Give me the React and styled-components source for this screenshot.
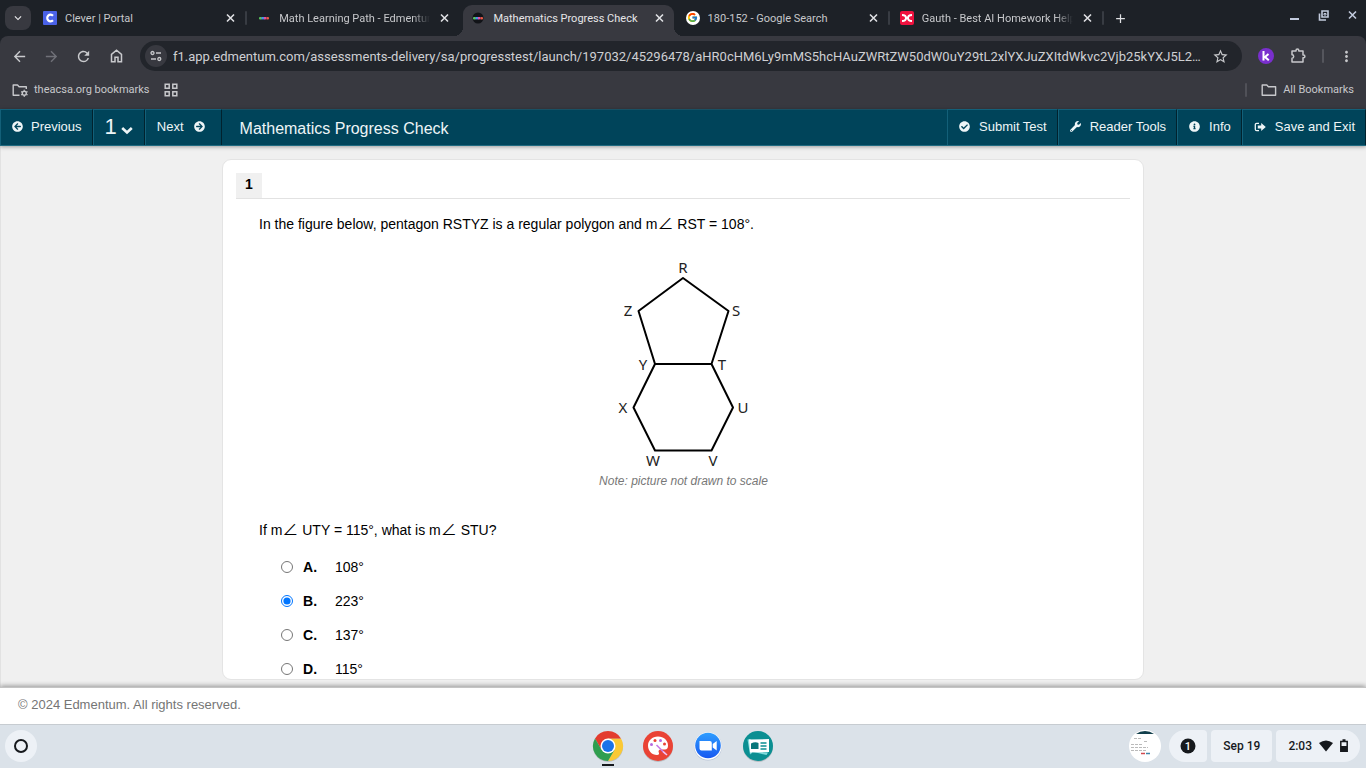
import React, { useState } from "react"
import styled, { createGlobalStyle } from "styled-components"
import {
  FaArrowCircleLeft,
  FaArrowCircleRight,
  FaCheckCircle,
  FaInfoCircle,
  FaWrench,
} from "react-icons/fa"
import { FcGoogle } from "react-icons/fc"
import {
  MdAdd,
  MdArrowBack,
  MdArrowForward,
  MdKeyboardArrowDown,
  MdMoreVert,
  MdRefresh,
  MdStarBorder,
} from "react-icons/md"

const GlobalStyle = createGlobalStyle`
  * {
    box-sizing: border-box;
  }
  body {
    margin: 0;
    background: #f0f0f0;
  }
  button {
    margin: 0;
    padding: 0;
    border: 0;
    background: none;
    color: inherit;
    font: inherit;
    cursor: pointer;
  }
  a {
    color: inherit;
    text-decoration: none;
  }
  svg {
    display: block;
    flex-shrink: 0;
  }
`

const Screen = styled.div`
  display: flex;
  flex-direction: column;
  height: 100vh;
  overflow: hidden;
`

/* browser */

const Browser = styled.header`
  flex-shrink: 0;
  background: #1d2127;
  color: #c7c8cb;
  font-family: Roboto, sans-serif;
  font-size: 11px;
`

const TabStrip = styled.div`
  display: flex;
  height: 36px;
  padding-left: 5px;
`

const TabSearch = styled.button`
  display: flex;
  align-items: center;
  justify-content: center;
  width: 26px;
  height: 24px;
  margin: 6px 4px 0 0;
  border-radius: 8px;
  background: #383940;
  color: #e8e8ea;
`

const Tabs = styled.nav`
  display: flex;
  flex: 0 1 1071px;
  min-width: 0;
`

const Tab = styled.div`
  position: relative;
  display: flex;
  flex: 1;
  align-items: center;
  min-width: 0;
  height: ${(p) => (p.$active ? 31 : 26)}px;
  margin: 5px 4px 0 0;
  padding: ${(p) => (p.$active ? "0 8px 5px" : "0 8px")};
  border-radius: 9px 9px 0 0;
  background: ${(p) => (p.$active ? "#383940" : "transparent")};
  color: ${(p) => (p.$active ? "#e6e6e8" : "#c7c8cb")};

  &::before,
  &::after {
    content: "";
    display: ${(p) => (p.$active ? "block" : "none")};
    position: absolute;
    bottom: 0;
    width: 9px;
    height: 9px;
  }
  &::before {
    right: 100%;
    background: radial-gradient(circle at 0 0, transparent 9px, #383940 9px);
  }
  &::after {
    left: 100%;
    background: radial-gradient(circle at 100% 0, transparent 9px, #383940 9px);
  }
`

const TabTitle = styled.a`
  flex: 1;
  min-width: 0;
  margin-left: 8px;
  overflow: hidden;
  white-space: nowrap;
  mask-image: ${(p) =>
    p.$fade ? "linear-gradient(to right, #000 calc(100% - 18px), transparent)" : "none"};
`

const TabClose = styled.button`
  margin-left: 8px;
  color: #e0e1e4;
`

const Divider = styled.span`
  flex-shrink: 0;
  width: 2px;
  height: 14px;
  margin: ${(p) => p.$margin || "0"};
  border-radius: 1px;
  background: ${(p) => p.$color || "#383c43"};
`

const WindowControls = styled.div`
  display: flex;
  gap: 16px;
  align-items: center;
  align-self: flex-start;
  margin: 9px 7px 0 auto;
  color: #c2cbdd;
`

const NewTab = styled.button`
  margin-left: 7px;
  color: #e0e1e4;
`

const ToolBar = styled.div`
  display: flex;
  align-items: center;
  height: 40px;
  padding: 0 11px;
  border-radius: 8px 8px 0 0;
  background: #383940;
`

const ToolButton = styled.button`
  margin-right: 15px;
  color: ${(p) => (p.$faded ? "#707178" : "#c9cacd")};
`

const AddressBar = styled.div`
  display: flex;
  flex: 1;
  align-items: center;
  height: 30px;
  margin-right: 16px;
  padding: 0 13px 0 5px;
  border-radius: 15px;
  background: #22252b;
`

const SiteInfo = styled.button`
  display: flex;
  align-items: center;
  justify-content: center;
  width: 22px;
  height: 22px;
  border-radius: 50%;
  background: #383940;
`

const AddressInput = styled.input`
  flex: 1;
  min-width: 0;
  margin: 0 9px 0 6px;
  padding: 0;
  border: 0;
  outline: 0;
  background: none;
  color: #cfd0d3;
  font: 13px Roboto, sans-serif;
  text-overflow: ellipsis;
`

const Extension = styled.button`
  display: flex;
  align-items: center;
  justify-content: center;
  width: 16px;
  height: 16px;
  margin-right: 16px;
  border-radius: 50%;
  background: #7a2fce;
  color: #fff;
`

const BookmarksBar = styled.div`
  display: flex;
  align-items: center;
  height: 33px;
  padding: 0 12px 6px;
  background: #383940;
`

const Bookmark = styled.a`
  display: flex;
  align-items: center;
  gap: 6px;
  margin-right: 14px;
`

const AllBookmarks = styled(Bookmark)`
  margin: 0 0 0 14px;
`

/* test player */

const Player = styled.div`
  display: flex;
  flex: 1;
  flex-direction: column;
  min-height: 0;
  background: #f0f0f0;
  color: #000;
  font-family: "Liberation Sans", Arial, sans-serif;
  font-size: 14px;
`

const NavBar = styled.nav`
  position: relative;
  display: flex;
  flex-shrink: 0;
  height: 37px;
  border-bottom: 1px solid #1f6a80;
  background: #00445a;
  box-shadow: 0 1px 4px rgba(0, 0, 0, 0.35);
  color: #eef5f7;
`

const NavButton = styled.button`
  display: flex;
  align-items: center;
  gap: ${(p) => p.$gap || 9}px;
  padding: 0 ${(p) => p.$end || 10}px 2px 11px;
  border: 1px solid #136079;
  border-width: 1px 1px 0;
  border-right-color: #01222e;
  font-size: ${(p) => (p.$large ? 22 : 13)}px;
`

const Title = styled.h1`
  flex: 1;
  margin: 0;
  padding: 2px 0 0 18px;
  border-top: 1px solid #185063;
  font-size: 16px;
  font-weight: 400;
  line-height: 34px;
`

const Content = styled.main`
  display: flex;
  flex: 1;
  justify-content: center;
  min-height: 0;
  padding: 13px 16px 7px;
  box-shadow: inset 1px 0 #e2e2e2;
`

const Card = styled.section`
  width: 922px;
  overflow: hidden;
  padding: 13px;
  border: 1px solid #e4e4e4;
  border-radius: 9px;
  background: #fff;
`

const QuestionHead = styled.div`
  display: flex;
  border-bottom: 1px solid #e2e2e2;
`

const QuestionNumber = styled.h2`
  width: 26px;
  margin: 0;
  padding-bottom: 2px;
  background: #f0f0f0;
  font-size: 14px;
  line-height: 23px;
  text-align: center;
`

const QuestionBody = styled.div`
  padding: 15px 22px 0 23px;
`

const Prompt = styled.p`
  margin: 0;
  font-size: 14px;
  line-height: 20px;
`

const Angle = styled.span`
  font-family: "Noto Sans CJK SC", sans-serif;
  font-size: 16px;
  line-height: 0;
`

const FigureBox = styled.figure`
  display: flex;
  flex-direction: column;
  align-items: center;
  margin: 24px 0 31px;
`

const Shape = styled.svg`
  font-family: "Noto Sans", sans-serif;
  font-size: 15px;
  fill: #222;
  text-anchor: middle;

  path {
    fill: none;
    stroke: #000;
    stroke-width: 2;
    stroke-linejoin: round;
  }
`

const Caption = styled.figcaption`
  color: #777;
  font-size: 12px;
  font-style: italic;
  line-height: 15px;
`

const Choices = styled.fieldset`
  margin: 10px 0 0;
  padding: 0 0 0 22px;
  border: 0;
`

const Choice = styled.label`
  display: flex;
  align-items: center;
  height: 34px;
`

const Radio = styled.input`
  width: 12px;
  height: 12px;
  margin: 0 10px 0 0;
`

const Letter = styled.b`
  width: 32px;
`

const Copyright = styled.footer`
  position: relative;
  flex-shrink: 0;
  height: 37px;
  padding-left: 18px;
  border-top: 1px solid #c4c4c4;
  background: #fff;
  box-shadow: 0 -1px 5px rgba(0, 0, 0, 0.4);
  color: #757575;
  font-size: 13px;
  line-height: 34px;
`

/* shelf */

const Shelf = styled.footer`
  position: relative;
  display: grid;
  grid-template-columns: 1fr auto 1fr;
  flex-shrink: 0;
  align-items: center;
  height: 44px;
  padding: 0 6px 2px 5px;
  border-top: 1px solid #c7ccd1;
  background: #dbe2e9;
  color: #16191d;
  font: 500 12px Roboto, sans-serif;
`

const Launcher = styled.button`
  display: flex;
  align-items: center;
  justify-content: center;
  width: 32px;
  height: 32px;
  border-radius: 50%;
  background: #edf1f6;
`

const Apps = styled.div`
  display: flex;
  gap: 18px;
`

const AppButton = styled.button`
  position: relative;

  &::after {
    content: "";
    display: ${(p) => (p.$running ? "block" : "none")};
    position: absolute;
    bottom: -4px;
    left: 10px;
    width: 12px;
    height: 2px;
    background: #16191d;
  }
`

const Tray = styled.div`
  display: flex;
  align-items: center;
  justify-content: flex-end;
  gap: 4px;
`

const TrayButton = styled.button`
  display: flex;
  align-items: center;
  justify-content: center;
  gap: 7px;
  height: 32px;
  padding: 0 ${(p) => p.$pad || 12}px;
  border-radius: ${(p) => p.$radius || "4px"};
  background: #edf1f6;
`

const HoldingSpace = styled.button`
  margin-right: 4px;
`

const CleverIcon = () => (
  <svg width="14" height="14" viewBox="0 0 14 14">
    <rect width="14" height="14" rx="1" fill="#4a62e8" />
    <path d="M10 4.8A3.3 3.3 0 1 0 10 9.2" fill="none" stroke="#fff" strokeWidth="2.2" />
  </svg>
)

const EdmentumIcon = ({ dark }) => (
  <svg width="14" height="14" viewBox="0 0 14 14">
    {dark && <circle cx="7" cy="7" r="5.5" fill="#111317" />}
    <rect x="2" y="6" width="3" height="2.4" rx="1" fill="#58c75a" />
    <rect x="4.5" y="6" width="3" height="2.4" fill="#4c8de8" />
    <rect x="7" y="6" width="2.5" height="2.4" fill="#e44fa0" />
    <rect x="9.5" y="6" width="2.5" height="2.4" rx="1" fill="#ef5b43" />
  </svg>
)

const GoogleIcon = () => (
  <svg width="14" height="14" viewBox="0 0 14 14">
    <circle cx="7" cy="7" r="7" fill="#fff" />
    <FcGoogle x="1" y="1" width="12" height="12" />
  </svg>
)

const GauthIcon = () => (
  <svg width="14" height="14" viewBox="0 0 14 14">
    <rect width="14" height="14" rx="2" fill="#f0123f" />
    <path
      d="M2 4c3 0 4 1 4 3s-1 3-4 3M12 4c-3 0-4 1-4 3s1 3 4 3M6 7h2"
      fill="none"
      stroke="#fff"
      strokeWidth="2"
    />
  </svg>
)

const CloseIcon = () => (
  <svg width="13" height="13" viewBox="0 0 13 13">
    <path d="m3 2.500 7 7M10 2.500l-7 7" stroke="currentColor" strokeWidth="1.6" />
  </svg>
)

const MinimizeIcon = () => (
  <svg width="13" height="13" viewBox="0 0 13 13">
    <path d="M2 10h9" stroke="currentColor" strokeWidth="2" />
  </svg>
)

const RestoreIcon = () => (
  <svg width="13" height="13" viewBox="0 0 13 13" fill="none" stroke="currentColor">
    <path d="M5 2h6v6H5z" strokeWidth="1.6" />
    <path d="M7 4.500h2v1.500H7z" />
    <path d="M2.500 4.500v6.500H9" strokeWidth="1.6" />
  </svg>
)

const HomeIcon = () => (
  <svg width="18" height="18" viewBox="0 0 18 18" fill="none" stroke="currentColor" strokeWidth="1.5">
    <path d="M4.500 7.300 9.500 3.200l5 4.100v7.500H11v-4.600H8v4.600H4.500z" />
  </svg>
)

const SiteInfoIcon = () => (
  <svg width="12" height="12" viewBox="0 0 12 12" fill="none" stroke="currentColor" strokeWidth="1.3">
    <circle cx="2.5" cy="3" r="1.5" />
    <path d="M6 3h5M1 9h5" />
    <circle cx="9.3" cy="9" r="1.5" />
  </svg>
)

const PuzzleIcon = () => (
  <svg width="18" height="18" viewBox="0 0 18 18" fill="none" stroke="currentColor" strokeWidth="1.5">
    <path
      d="M2 4h4v-.6a1.400 1.400 0 0 1 2.800 0V4h4.200v4h.5a1.400 1.400 0 0 1 0 2.800h-.5V15H2v-3.800a1.700 1.700 0 0 0 0-3.400z"
      strokeLinejoin="round"
    />
  </svg>
)

const FolderIcon = () => (
  <svg width="16" height="14" viewBox="0 0 16 14" fill="none" stroke="currentColor" strokeWidth="1.4">
    <path d="M1.200 12.300V2h4.600l1.600 1.700h7.200v8.600z" strokeLinejoin="round" />
  </svg>
)

const ManagedFolderIcon = () => (
  <svg width="16" height="14" viewBox="0 0 16 14" fill="none" stroke="currentColor" strokeWidth="1.4">
    <path d="M7.500 12.300H1.200V2h4.300l1.600 1.700h7.200V6" strokeLinejoin="round" />
    <circle cx="12.3" cy="10.2" r="2" />
    <path d="M12.300 6.700v1M12.300 12.700v1M9.200 8.500l1 .6M14.500 11.400l1 .6M9.200 12l1-.6M14.500 9.100l1-.6" />
  </svg>
)

const GridIcon = () => (
  <svg width="14" height="14" viewBox="0 0 14 14" fill="none" stroke="currentColor" strokeWidth="1.5">
    <path d="M1.200 1.200h4v4h-4zM8.800 1.200h4v4h-4zM1.200 8.800h4v4h-4zM8.800 8.800h4v4h-4z" />
  </svg>
)

const KIcon = () => (
  <svg width="10" height="10" viewBox="0 0 10 10" fill="none" stroke="#fff" strokeWidth="2">
    <path d="M2.500 0v9.500M7.500 3 4 6l3.800 3.300" />
  </svg>
)

const ChevronIcon = () => (
  <svg width="12" height="10" viewBox="0 0 12 10">
    <path d="m1.200 2 4.800 4.500L10.800 2" fill="none" stroke="currentColor" strokeWidth="2.6" />
  </svg>
)

const PageNumber = styled.span`
  line-height: 34px;
`

const ChevronBox = styled.span`
  padding-top: 8px;
`

const SignOutIcon = () => (
  <svg width="12" height="12" viewBox="0 0 12 12">
    <path d="M5 2.300H2.800Q1.300 2.300 1.300 3.800v4.400q0 1.500 1.500 1.500H5" fill="none" stroke="currentColor" strokeWidth="1.3" />
    <path d="M3.800 4.500h3.400V2L11.800 6 7.200 10V7.500H3.800z" fill="currentColor" />
  </svg>
)

const ChromeIcon = () => (
  <svg width="32" height="32" viewBox="0 0 32 32">
    <circle cx="16" cy="17" r="15" fill="#b9bec3" />
    <path d="M16 8.500h13A15 15 0 0 1 16 31l6.500-11.200z" fill="#fbc934" />
    <path d="M9.500 19.800 3 8.500A15 15 0 0 1 29 8.500H16z" fill="#e33b2e" />
    <path d="M3 8.500A15 15 0 0 0 16 31l6.500-11.200h-13z" fill="#2f9e4f" />
    <circle cx="16" cy="16" r="7.5" fill="#fff" />
    <circle cx="16" cy="16" r="6" fill="#1a73e8" />
  </svg>
)

const CanvasIcon = () => (
  <svg width="32" height="32" viewBox="0 0 32 32">
    <circle cx="16" cy="17" r="15" fill="#b9bec3" />
    <circle cx="16" cy="16" r="15" fill="#ea4335" />
    <path
      d="M16 6.500c-5.800 0-10 4-10 9 0 5.300 3.800 9.500 9 9.500 2 0 2.400-1.400 1.800-2.600-.7-1.400 0-3 2-3H23c2 0 3-1.500 3-4 0-5-4.200-8.900-10-8.900z"
      fill="#fff"
    />
    <circle cx="9.5" cy="14.5" r="1.5" fill="#b56ae0" />
    <circle cx="13" cy="10.5" r="1.5" fill="#ea4335" />
    <circle cx="18.5" cy="10.5" r="1.5" fill="#b56ae0" />
    <circle cx="22.5" cy="14" r="1.5" fill="#ea4335" />
    <path d="m14.500 15 9 9" stroke="#c77be8" strokeWidth="1.6" />
    <path d="m21 21.500 4 3.500" stroke="#f7c4ef" strokeWidth="1.6" />
  </svg>
)

const ZoomIcon = () => (
  <svg width="32" height="32" viewBox="0 0 32 32">
    <defs>
      <linearGradient id="zoom" x2="0" y2="1">
        <stop stopColor="#2d9dff" />
        <stop offset="1" stopColor="#1858f0" />
      </linearGradient>
    </defs>
    <circle cx="16" cy="16.5" r="14" fill="#b9c4d6" />
    <circle cx="16" cy="16" r="13.7" fill="#fff" />
    <circle cx="16" cy="15.5" r="12.8" fill="url(#zoom)" />
    <path d="M7.500 11h10.300q2 0 2 2v7.500H9.500q-2 0-2-2zM20.700 14l4-3v9.500l-4-3z" fill="#fff" />
  </svg>
)

const NewsIcon = () => (
  <svg width="32" height="32" viewBox="0 0 32 32">
    <circle cx="16" cy="17" r="15" fill="#b9bec3" />
    <circle cx="16" cy="16" r="15" fill="#0b8f92" />
    <path d="m5.500 9.500 3-.5 1.500 14-2 1.500zM10 21.500l16 1-1.500 2.500z" fill="#7fdcdd" />
    <path d="M7 9.500 27 9v13L8 22.500z" fill="#fff" />
    <path d="M9 13.500q4-2 7.500-.5v6H9z" fill="#07777a" />
    <path d="M18.500 13h6M18.500 16h6M18.500 19h6" stroke="#0b8f92" strokeWidth="1.5" />
  </svg>
)

const ScreenshotIcon = () => (
  <svg width="32" height="32" viewBox="0 0 32 32">
    <circle cx="16" cy="16" r="16" fill="#fff" />
    <path d="M7 4A15 15 0 0 1 25 4z" fill="#123f4c" />
    <path d="M5 8.500h7M15 11.500h3M2 14.500h12M2 17.500h17M2 20.500h15" stroke="#bbb" strokeDasharray="3 1" />
    <path d="M12 23.500h4" stroke="#d14a50" strokeWidth="1.5" />
    <path d="M17 23.500h4" stroke="#3e86a8" strokeWidth="1.5" />
  </svg>
)

const LauncherIcon = () => (
  <svg width="16" height="16" viewBox="0 0 16 16">
    <circle cx="8" cy="8" r="6" fill="none" stroke="#16191d" strokeWidth="2" />
  </svg>
)

const NoticeIcon = () => (
  <svg width="16" height="16" viewBox="0 0 16 16">
    <circle cx="8" cy="8" r="7.5" fill="#16191d" />
    <text x="8" y="12" fill="#fff" fontSize="11" textAnchor="middle">
      1
    </text>
  </svg>
)

const WifiIcon = () => (
  <svg width="14" height="12" viewBox="0 0 14 12">
    <path d="M0 3Q7-2.200 14 3L7 11.500z" fill="currentColor" />
  </svg>
)

const BatteryIcon = () => (
  <svg width="8" height="13" viewBox="0 0 8 13">
    <path d="M.8 2.500h6.400v9.700H.8z" fill="none" stroke="currentColor" strokeWidth="1.5" />
    <path d="M2.500.3h3V2h-3zM1 7h6v5H1z" fill="currentColor" />
  </svg>
)

const tabs = [
  { title: "Clever | Portal", icon: <CleverIcon /> },
  { title: "Math Learning Path - Edmentum", icon: <EdmentumIcon />, fade: true },
  { title: "Mathematics Progress Check", icon: <EdmentumIcon dark />, active: true },
  { title: "180-152 - Google Search", icon: <GoogleIcon /> },
  { title: "Gauth - Best AI Homework Helper", icon: <GauthIcon />, fade: true },
]

const url =
  "f1.app.edmentum.com/assessments-delivery/sa/progresstest/launch/197032/45296478/aHR0cHM6Ly9mMS5hcHAuZWRtZW50dW0uY29tL2xlYXJuZXItdWkvc2Vjb25kYXJ5L2luZGV4Lmh0bWw"

const choices = [
  ["A", "108°"],
  ["B", "223°"],
  ["C", "137°"],
  ["D", "115°"],
]

const labels = [
  ["R", 82, 15],
  ["Z", 27, 58],
  ["S", 135, 58],
  ["Y", 42, 112],
  ["T", 121, 112],
  ["X", 22, 155],
  ["U", 142, 155],
  ["W", 52, 208],
  ["V", 112, 208],
]

const Chrome = () => (
  <Browser>
    <TabStrip>
      <TabSearch aria-label="Search tabs">
        <MdKeyboardArrowDown size={14} />
      </TabSearch>
      <Tabs>
        {tabs.map((tab, i) => (
          <React.Fragment key={tab.title}>
            <Tab $active={tab.active}>
              {tab.icon}
              <TabTitle href="#" $fade={tab.fade}>
                {tab.title}
              </TabTitle>
              <TabClose aria-label="Close tab">
                <CloseIcon />
              </TabClose>
            </Tab>
            {(i === 0 || i > 2) && <Divider $margin="11px 0 0 -4px" />}
            {(i === 0 || i > 2) && <Divider $color="transparent" />}
          </React.Fragment>
        ))}
      </Tabs>
      <NewTab aria-label="New tab">
        <MdAdd size={15} />
      </NewTab>
      <WindowControls>
        <button aria-label="Minimize">
          <MinimizeIcon />
        </button>
        <button aria-label="Restore">
          <RestoreIcon />
        </button>
        <button aria-label="Close">
          <CloseIcon />
        </button>
      </WindowControls>
    </TabStrip>
    <ToolBar>
      <ToolButton aria-label="Back">
        <MdArrowBack size={17} />
      </ToolButton>
      <ToolButton aria-label="Forward" $faded>
        <MdArrowForward size={17} />
      </ToolButton>
      <ToolButton aria-label="Reload">
        <MdRefresh size={17} />
      </ToolButton>
      <ToolButton aria-label="Home">
        <HomeIcon />
      </ToolButton>
      <AddressBar>
        <SiteInfo aria-label="Site information">
          <SiteInfoIcon />
        </SiteInfo>
        <AddressInput aria-label="Address" defaultValue={url} />
        <button aria-label="Bookmark this tab">
          <MdStarBorder size={17} />
        </button>
      </AddressBar>
      <Extension aria-label="Kami">
        <KIcon />
      </Extension>
      <button aria-label="Extensions">
        <PuzzleIcon />
      </button>
      <Divider $margin="0 14px 0 14px" $color="#55565d" />
      <button aria-label="Menu">
        <MdMoreVert size={17} />
      </button>
    </ToolBar>
    <BookmarksBar>
      <Bookmark href="#">
        <ManagedFolderIcon />
        theacsa.org bookmarks
      </Bookmark>
      <button aria-label="Tab groups">
        <GridIcon />
      </button>
      <Divider $margin="0 0 0 auto" $color="#505158" />
      <AllBookmarks href="#">
        <FolderIcon />
        All Bookmarks
      </AllBookmarks>
    </BookmarksBar>
  </Browser>
)

const Polygons = () => (
  <Shape width="164" height="216" viewBox="1 0 164 216" role="img" aria-label="Pentagon RSTYZ and hexagon TUVWXY">
    <path d="M82 20 127.500 53 110.500 106H54L37.500 53zM54 106 32.500 149.500 54 192.500h56.500L132 149.500 110.500 106" />
    {labels.map(([name, x, y]) => (
      <text key={name} x={x} y={y}>
        {name}
      </text>
    ))}
  </Shape>
)

export default () => {
  const [answer, setAnswer] = useState("B")

  return (
    <Screen>
      <GlobalStyle />
      <Chrome />
      <Player>
        <NavBar>
          <NavButton $gap={8}>
            <FaArrowCircleLeft size={11} />
            Previous
          </NavButton>
          <NavButton $large $gap={4} $end={11} aria-label="Question 1">
            <PageNumber>1</PageNumber>
            <ChevronBox>
              <ChevronIcon />
            </ChevronBox>
          </NavButton>
          <NavButton $gap={10} $end={16}>
            Next
            <FaArrowCircleRight size={11} />
          </NavButton>
          <Title>Mathematics Progress Check</Title>
          <NavButton>
            <FaCheckCircle size={11} />
            Submit Test
          </NavButton>
          <NavButton>
            <FaWrench size={11} />
            Reader Tools
          </NavButton>
          <NavButton>
            <FaInfoCircle size={11} />
            Info
          </NavButton>
          <NavButton>
            <SignOutIcon />
            Save and Exit
          </NavButton>
        </NavBar>
        <Content>
          <Card>
            <QuestionHead>
              <QuestionNumber>1</QuestionNumber>
            </QuestionHead>
            <QuestionBody>
              <Prompt>
                In the figure below, pentagon RSTYZ is a regular polygon and m
                <Angle>∠</Angle> RST = 108°.
              </Prompt>
              <FigureBox>
                <Polygons />
                <Caption>Note: picture not drawn to scale</Caption>
              </FigureBox>
              <Prompt>
                If m<Angle>∠</Angle> UTY = 115°, what is m<Angle>∠</Angle> STU?
              </Prompt>
              <Choices aria-label="Answer choices">
                {choices.map(([letter, text]) => (
                  <Choice key={letter}>
                    <Radio
                      type="radio"
                      name="answer"
                      checked={answer === letter}
                      onChange={() => setAnswer(letter)}
                    />
                    <Letter>{letter}.</Letter>
                    {text}
                  </Choice>
                ))}
              </Choices>
            </QuestionBody>
          </Card>
        </Content>
        <Copyright>© 2024 Edmentum. All rights reserved.</Copyright>
      </Player>
      <Shelf>
        <Launcher aria-label="Launcher">
          <LauncherIcon />
        </Launcher>
        <Apps>
          <AppButton aria-label="Chrome" $running>
            <ChromeIcon />
          </AppButton>
          <AppButton aria-label="Canvas">
            <CanvasIcon />
          </AppButton>
          <AppButton aria-label="Zoom">
            <ZoomIcon />
          </AppButton>
          <AppButton aria-label="News">
            <NewsIcon />
          </AppButton>
        </Apps>
        <Tray>
          <HoldingSpace aria-label="Recent captures">
            <ScreenshotIcon />
          </HoldingSpace>
          <TrayButton $pad={11} $radius="16px 4px 4px 16px" aria-label="Notifications">
            <NoticeIcon />
          </TrayButton>
          <TrayButton>Sep 19</TrayButton>
          <TrayButton $radius="4px 16px 16px 4px">
            2:03 <WifiIcon /> <BatteryIcon />
          </TrayButton>
        </Tray>
      </Shelf>
    </Screen>
  )
}
